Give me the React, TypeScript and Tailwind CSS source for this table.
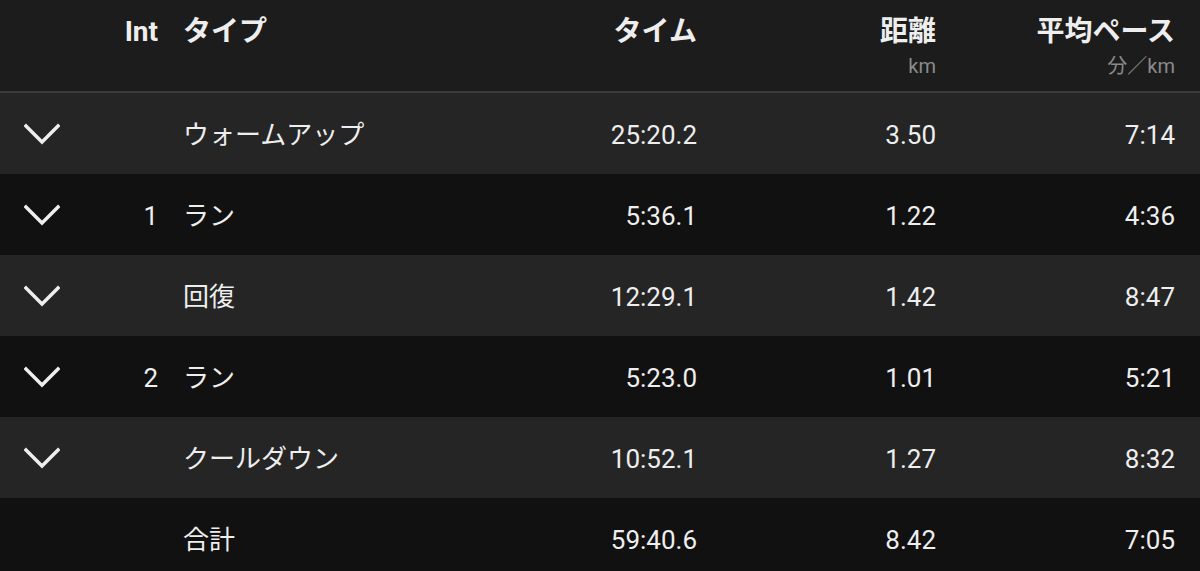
import React from "react";

const rows = [
  { chev: true, int: "", type: "ウォームアップ", time: "25:20.2", dist: "3.50", pace: "7:14" },
  { chev: true, int: "1", type: "ラン", time: "5:36.1", dist: "1.22", pace: "4:36" },
  { chev: true, int: "", type: "回復", time: "12:29.1", dist: "1.42", pace: "8:47" },
  { chev: true, int: "2", type: "ラン", time: "5:23.0", dist: "1.01", pace: "5:21" },
  { chev: true, int: "", type: "クールダウン", time: "10:52.1", dist: "1.27", pace: "8:32" },
  { chev: false, int: "", type: "合計", time: "59:40.6", dist: "8.42", pace: "7:05" },
];

const font = { fontFamily: 'Roboto, "Noto Sans CJK JP", sans-serif' };

function Chevron() {
  return (
    <svg width="36" height="22" viewBox="0 0 36 22" fill="none">
      <polyline points="2,3 18,19 34,3" stroke="#eeeeee" strokeWidth="3.4" strokeLinecap="square" strokeLinejoin="miter" />
    </svg>
  );
}

export default function App() {
  return (
    <div className="w-[1200px] h-[571px] overflow-hidden bg-[#111111] text-[#eeeeee]" style={font}>
      <div className="h-[91px] bg-[#1c1c1c] flex px-[25px] pt-[16px]">
        <div className="w-[133px] text-right text-[28px] leading-[32px] font-bold">Int</div>
        <div className="ml-[25px] flex-1 text-[28px] leading-[32px] font-bold">タイプ</div>
        <div className="w-[200px] text-right text-[28px] leading-[32px] font-bold">タイム</div>
        <div className="w-[239px] flex flex-col items-end">
          <div className="text-[28px] leading-[32px] font-bold">距離</div>
          <div className="text-[20px] leading-[24px] mt-[6px] text-[#8a8a8a]">km</div>
        </div>
        <div className="w-[239px] flex flex-col items-end">
          <div className="text-[28px] leading-[32px] font-bold">平均ペース</div>
          <div className="text-[20px] leading-[24px] mt-[6px] text-[#8a8a8a]">分／km</div>
        </div>
      </div>
      <div className="h-[2px] bg-[#3c3c3c]" />
      {rows.map((r, i) => (
        <div
          key={i}
          className={`h-[81px] flex items-center px-[25px] pt-[3px] text-[26px] ${i % 2 === 0 ? "bg-[#252525]" : "bg-[#111111]"}`}
        >
          <div className="w-[133px] flex items-center justify-between">
            <div className="w-[36px] flex items-center -ml-[1px] -mt-[3px]">{r.chev ? <Chevron /> : null}</div>
            <div>{r.int}</div>
          </div>
          <div className="ml-[25px] flex-1">{r.type}</div>
          <div className="w-[200px] text-right">{r.time}</div>
          <div className="w-[239px] text-right">{r.dist}</div>
          <div className="w-[239px] text-right">{r.pace}</div>
        </div>
      ))}
    </div>
  );
}
